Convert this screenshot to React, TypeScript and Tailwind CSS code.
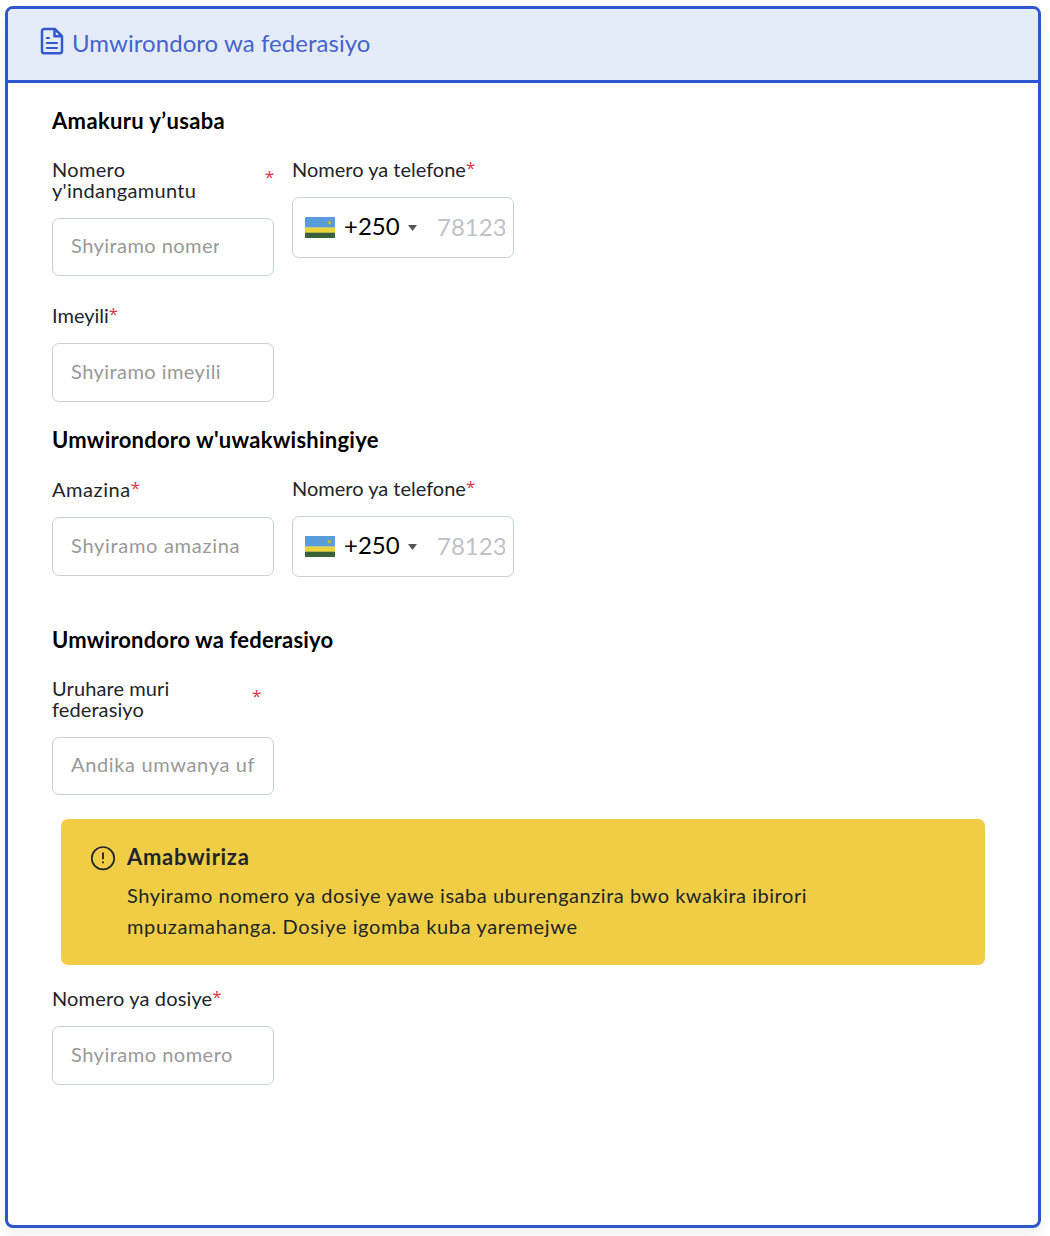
import { ReactNode } from "react";

const RequiredMark = () => (
  <span className="align-[3px] font-['Open_Sans'] text-[17px] leading-[15px] tracking-normal text-[#dc3545]">
    *
  </span>
);

const FileIcon = () => (
  <svg
    className="w-[24px] h-[28px] shrink-0"
    viewBox="0 0 24 28"
    fill="none"
    stroke="#3159cd"
    strokeWidth="2.5"
    strokeLinecap="round"
    strokeLinejoin="round"
  >
    <path d="M14.8 2H4.2A2.2 2.2 0 0 0 2 4.2V24A2.2 2.2 0 0 0 4.2 26.2H19.8A2.2 2.2 0 0 0 22 24V9.2Z" />
    <path d="M14.5 2.4V9.3H21.6" />
    <path d="M6.8 11H9M6.8 16H17M6.8 21H17" strokeWidth="2.1" />
  </svg>
);

const InfoIcon = () => (
  <svg className="w-[26px] h-[26px] shrink-0" viewBox="0 0 26 26" fill="none" stroke="#212529">
    <circle cx="13" cy="13.2" r="11.2" strokeWidth="1.7" />
    <path d="M13 8.2V13.4M13 17.2V17.6" strokeWidth="1.9" strokeLinecap="round" />
  </svg>
);

const RwandaFlag = () => (
  <svg className="w-[30px] h-[21px] shrink-0" viewBox="0 0 30 21">
    <rect width="30" height="10.7" fill="#599cdc" />
    <rect y="10.5" width="30" height="5.4" fill="#ead53d" />
    <rect y="15.7" width="30" height="5.3" fill="#38603b" />
    <circle cx="24.4" cy="5.7" r="1.9" fill="#a5b052" />
    <circle cx="24.4" cy="5.7" r="1" fill="#d4c42b" />
  </svg>
);

type SectionTitleProps = {
  children: ReactNode;
  tracking?: string;
};

const SectionTitle = ({ children, tracking = "tracking-[0.17px]" }: SectionTitleProps) => (
  <h2 className={`h-[26px] leading-[26px] text-[22px] font-bold ${tracking} text-black whitespace-nowrap`}>
    {children}
  </h2>
);

type FieldProps = {
  label: ReactNode;
  placeholder: string;
  clip?: string;
  tracking?: string;
};

const Field = ({
  label,
  placeholder,
  clip = "pr-[16px]",
  tracking = "tracking-[0.45px]",
}: FieldProps) => (
  <div className="w-[222px]">
    <div className="-mt-px text-[20px] leading-[20.5px] tracking-[0.3px] text-[#212529]">{label}</div>
    <input
      className={`mt-[17.5px] block w-full h-[58.5px] rounded-[7px] border border-[#cbcfd7] pl-[18px] pb-[3px] ${clip} text-[20px] ${tracking} placeholder:text-[#999999]`}
      placeholder={placeholder}
    />
  </div>
);

const PhoneField = () => (
  <div className="w-[222px]">
    <div className="-mt-px text-[20px] leading-[20.5px] text-[#212529] whitespace-nowrap">
      Nomero ya telefone
      <RequiredMark />
    </div>
    <div className="mt-[17.5px] flex items-center w-full h-[61px] rounded-[7px] border border-[#cbcfd7] pl-[12px] pr-[8px]">
      <RwandaFlag />
      <span className="-mt-[3px] ml-[9px] w-[57px] text-[24px] leading-[30px] text-black">+250</span>
      <svg className="ml-[7px] w-[9px] h-[6px] shrink-0" viewBox="0 0 9 6">
        <path d="M0 0H9L4.5 6Z" fill="#555555" />
      </svg>
      <input
        className="-mt-[3px] ml-[20px] min-w-0 flex-1 h-[40px] text-[24px] placeholder:text-[#bfc2c7]"
        placeholder="781234567"
      />
    </div>
  </div>
);

const App = () => {
  return (
    <div className="w-[1050px] h-[1236px] overflow-hidden bg-white pt-[6px] pl-[5px] font-['Lato','Open_Sans',sans-serif]">
      <div className="w-[1036px] h-[1222px] rounded-[8px] border-3 border-[#2c58cd] shadow-[0_8px_16px_rgba(0,0,0,0.06)] overflow-hidden">
        {/* Card header */}
        <header className="flex h-[74px] bg-[#e4ecf9] border-b-3 border-[#2c58cd] pl-[32px] pt-[18px]">
          <FileIcon />
          <h1 className="ml-[8px] text-[24px] leading-[32px] tracking-[0.05px] text-[#4763cf] whitespace-nowrap">
            Umwirondoro wa federasiyo
          </h1>
        </header>

        <div className="pl-[44px] pt-[25px]">
          {/* Applicant */}
          <section className="h-[319px]">
            <SectionTitle tracking="tracking-[0.35px]">Amakuru y’usaba</SectionTitle>
            <div className="mt-[26px] flex gap-[18px]">
              <Field
                label={
                  <div className="flex items-start">
                    <span className="w-[213px]">
                      Nomero
                      <br />
                      y'indangamuntu
                    </span>
                    <span className="mt-[9px]">
                      <RequiredMark />
                    </span>
                  </div>
                }
                placeholder="Shyiramo nomero"
                clip="pr-[54px]"
              />
              <PhoneField />
            </div>
            <div className="mt-[30px]">
              <Field
                label={<span className="tracking-normal">Imeyili<RequiredMark /></span>}
                placeholder="Shyiramo imeyili"
              />
            </div>
          </section>

          {/* Representative */}
          <section className="h-[200px]">
            <SectionTitle tracking="tracking-[0.25px]">Umwirondoro w'uwakwishingiye</SectionTitle>
            <div className="mt-[26px] flex gap-[18px]">
              <div className="pt-px">
                <Field
                  label={<span className="tracking-[0.55px]">Amazina<RequiredMark /></span>}
                  placeholder="Shyiramo amazina"
                  tracking="tracking-[0.7px]"
                />
              </div>
              <PhoneField />
            </div>
          </section>

          {/* Federation */}
          <section>
            <SectionTitle>Umwirondoro wa federasiyo</SectionTitle>
            <div className="mt-[26px]">
              <Field
                label={
                  <div className="flex items-start tracking-[0.1px]">
                    <span className="w-[200px]">
                      Uruhare muri
                      <br />
                      federasiyo
                    </span>
                    <span className="mt-[9px]">
                      <RequiredMark />
                    </span>
                  </div>
                }
                placeholder="Andika umwanya uf"
                tracking="tracking-[0.65px]"
              />
            </div>

            <div className="mt-[24px] ml-[9px] flex w-[924px] h-[146px] rounded-[7px] bg-[#f0cd45] pl-[29px] pt-[25px] text-[#212529]">
              <div className="mt-[1px]">
                <InfoIcon />
              </div>
              <div className="ml-[11px]">
                <h3 className="h-[26px] leading-[26px] text-[22px] font-bold tracking-[0.7px]">
                  Amabwiriza
                </h3>
                <p className="mt-[10px] text-[20px] leading-[31px] tracking-[0.53px] whitespace-nowrap">
                  Shyiramo nomero ya dosiye yawe isaba uburenganzira bwo kwakira ibirori
                  <br />
                  <span className="tracking-[0.64px]">mpuzamahanga. Dosiye igomba kuba yaremejwe</span>
                </p>
              </div>
            </div>

            <div className="mt-[24px]">
              <Field
                label={<span className="tracking-[0.15px]">Nomero ya dosiye<RequiredMark /></span>}
                placeholder="Shyiramo nomero"
                clip="pr-[40px]"
                tracking="tracking-[0.5px]"
              />
            </div>
          </section>
        </div>
      </div>
    </div>
  );
};

export default App;
